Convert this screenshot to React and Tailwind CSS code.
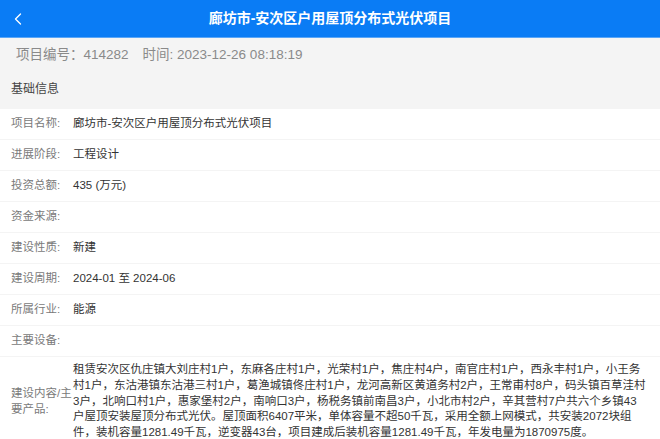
import { ChevronLeft } from 'lucide-react';

const rows = [
  { label: '项目名称:', value: '廊坊市-安次区户用屋顶分布式光伏项目' },
  { label: '进展阶段:', value: '工程设计' },
  { label: '投资总额:', value: '435 (万元)' },
  { label: '资金来源:', value: '' },
  { label: '建设性质:', value: '新建' },
  { label: '建设周期:', value: '2024-01 至 2024-06' },
  { label: '所属行业:', value: '能源' },
  { label: '主要设备:', value: '' },
];

const content =
  '租赁安次区仇庄镇大刘庄村1户，东麻各庄村1户，光荣村1户，焦庄村4户，南官庄村1户，西永丰村1户，小王务村1户，东沽港镇东沽港三村1户，葛渔城镇佟庄村1户，龙河高新区黄道务村2户，王常甫村8户，码头镇百草洼村3户，北响口村1户，惠家堡村2户，南响口3户，杨税务镇前南昌3户，小北市村2户，辛其营村7户共六个乡镇43户屋顶安装屋顶分布式光伏。屋顶面积6407平米，单体容量不超50千瓦，采用全额上网模式，共安装2072块组件，装机容量1281.49千瓦，逆变器43台，项目建成后装机容量1281.49千瓦，年发电量为1870975度。';

export default function App() {
  return (
    <div
      className="w-[660px] h-[439px] overflow-hidden bg-[#f4f4f4]"
      style={{ fontFamily: '"Liberation Sans", "Noto Sans CJK SC", sans-serif' }}
    >
      {/* Header */}
      <div className="h-[38px] bg-[#0a7cf5] border-b border-[#5aa6f7] flex items-center relative">
        <ChevronLeft className="absolute left-[8px] w-[20px] h-[20px] text-white" strokeWidth={1.6} />
        <h1 className="flex-1 text-center text-white font-bold text-[14px]">
          廊坊市-安次区户用屋顶分布式光伏项目
        </h1>
      </div>

      {/* Meta */}
      <div className="h-[35px] flex items-center pl-[16px] text-[13.5px] text-[#8a8a8a] gap-[14px]">
        <span>项目编号：414282</span>
        <span>时间: 2023-12-26 08:18:19</span>
      </div>

      <div className="h-[36px] flex items-center pb-[4px] pl-[11px] text-[12px] text-[#444]">基础信息</div>

      {/* Rows */}
      <div className="flex flex-col gap-px">
        {rows.map((r) => (
          <div key={r.label} className="h-[30px] bg-white flex items-center pl-[11px] text-[11.5px]">
            <span className="w-[62px] text-[#7a7a7a]">{r.label}</span>
            <span className="text-[#333]">{r.value}</span>
          </div>
        ))}
        <div className="bg-white flex items-center pl-[11px] py-[5px] text-[11.5px]">
          <span className="w-[62px] shrink-0 break-all text-[#7a7a7a] leading-[16px]">建设内容/主要产品:</span>
          <p className="flex-1 pr-[14px] text-[#333] leading-[15.8px]">{content}</p>
        </div>
      </div>
    </div>
  );
}
